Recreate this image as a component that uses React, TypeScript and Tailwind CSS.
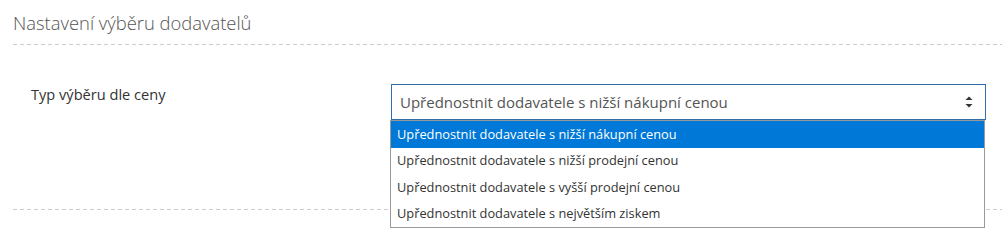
const options = [
  "Upřednostnit dodavatele s nižší nákupní cenou",
  "Upřednostnit dodavatele s nižší prodejní cenou",
  "Upřednostnit dodavatele s vyšší prodejní cenou",
  "Upřednostnit dodavatele s největším ziskem",
];

function Dashed() {
  return <div className="h-px w-full bg-[repeating-linear-gradient(to_right,#cccccc_0_4px,transparent_4px_7px)]" />;
}

export default function App() {
  return (
    <main className="h-[251px] w-[1002px] overflow-hidden bg-white font-['Open_Sans',sans-serif]">
      <section className="pl-[13px]">
        <h2 className="pb-[9px] pt-[10px] text-[18.4px] font-light leading-[25px] text-[#555]">
          Nastavení výběru dodavatelů
        </h2>
        <Dashed />

        <div className="grid grid-cols-[378px_595px] pb-[89px] pt-[39px]">
          <label className="pl-[18px] text-[14.6px] leading-[20px] text-[#333]">Typ výběru dle ceny</label>

          <div className="relative">
            <div className="flex h-[36px] items-center justify-between border border-[#2f6fab] bg-white pl-[8px] pr-[12px] text-[15px] text-[#555]">
              <span>{options[0]}</span>
              <svg width="8" height="12" viewBox="0 0 8 12" className="text-[#333]">
                <path d="M4 0.5 L7.5 4 L0.5 4 Z" fill="currentColor" />
                <path d="M0.5 8 L7.5 8 L4 11.5 Z" fill="currentColor" />
              </svg>
            </div>

            {/* open native list */}
            <ul className="absolute left-[-1px] top-[36px] z-10 w-[595px] border border-[#999] bg-white text-[12.8px] text-[#333]">
              {options.map((o, i) => (
                <li
                  key={o}
                  className={
                    i === 0
                      ? "flex h-[26.5px] items-center bg-[#0078d7] pl-[6px] text-white"
                      : "flex h-[26.5px] items-center pl-[6px]"
                  }
                >
                  {o}
                </li>
              ))}
            </ul>
          </div>
        </div>
        <Dashed />
      </section>
    </main>
  );
}
